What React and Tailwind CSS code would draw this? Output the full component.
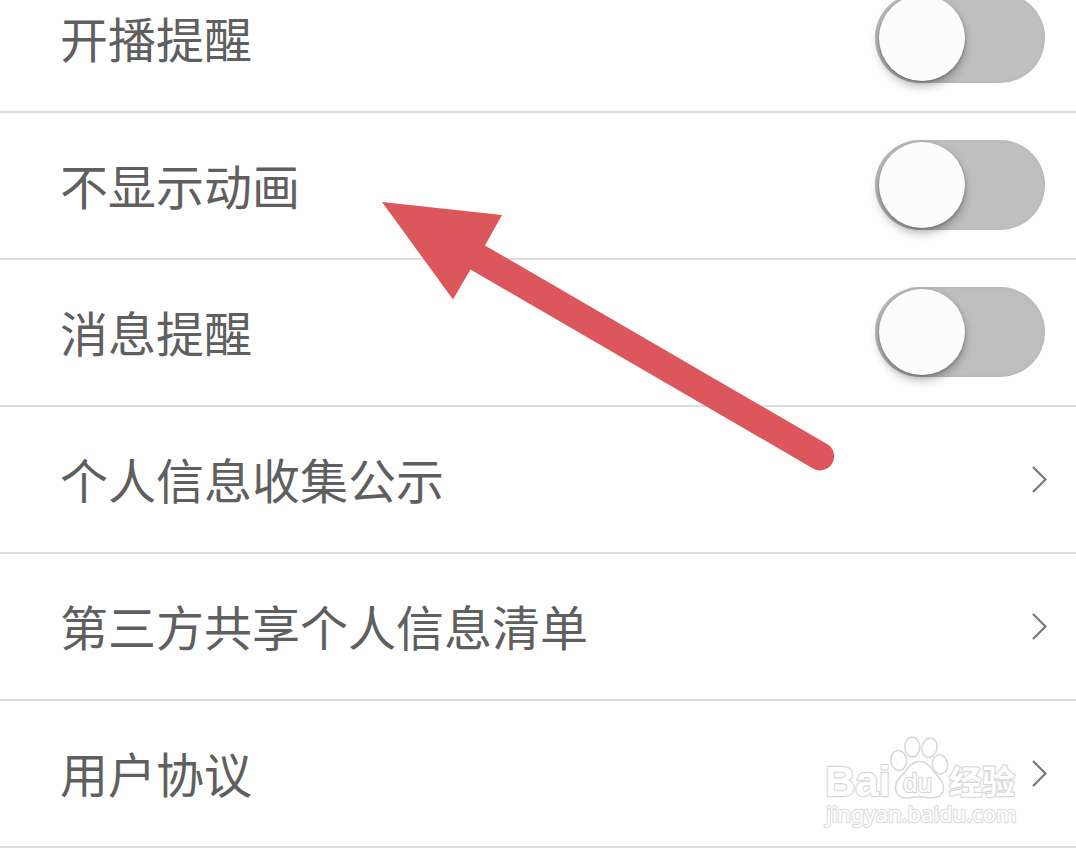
import React, { useState } from 'react';

const switches = [
  { id: 'live-reminder', label: '开播提醒' },
  { id: 'hide-animation', label: '不显示动画' },
  { id: 'message-reminder', label: '消息提醒' },
];

const links = [
  { href: '#collection', label: '个人信息收集公示' },
  { href: '#third-party', label: '第三方共享个人信息清单' },
  { href: '#agreement', label: '用户协议' },
];

const SwitchRow = ({ id, label }) => {
  const [on, setOn] = useState(false);
  return (
    <li className="flex h-[147px] items-center justify-between border-b-2 border-[#dddddd] pb-0.5 pl-[60px] pr-[31px]">
      <label htmlFor={id} className="pb-0.5 text-5xl text-[#5f5f5f]">{label}</label>
      <input
        id={id}
        type="checkbox"
        role="switch"
        checked={on}
        onChange={(e) => setOn(e.target.checked)}
        className="flex h-[90px] w-[170px] shrink-0 cursor-pointer appearance-none items-center rounded-full bg-[#bfbfbf] px-1 shadow-[inset_0_0_3px_#b0b0b0] before:size-[86px] before:rounded-full before:bg-[#fcfcfc] before:shadow-[0_5px_10px_rgba(0,0,0,0.3),0_1px_3px_rgba(0,0,0,0.25)] before:content-[''] checked:justify-end checked:bg-green-500"
      />
    </li>
  );
};

const LinkRow = ({ href, label }) => (
  <li className="border-b-2 border-[#dddddd]">
    <a href={href} className="flex h-[145px] items-center justify-between pb-0.5 pl-[60px] pr-7">
      <span className="pb-0.5 text-5xl text-[#5f5f5f]">{label}</span>
      <svg width="18" height="28" viewBox="0 0 18 28" fill="none" stroke="#777777" strokeWidth="2.200" aria-hidden="true">
        <path d="M3 2 L15.5 14.500 L3 27" />
      </svg>
    </a>
  </li>
);

const Arrow = () => (
  <svg
    className="pointer-events-none absolute left-[380px] top-[200px]"
    width="456"
    height="272"
    viewBox="380 200 456 272"
    fill="#dc575c"
    aria-hidden="true"
  >
    <path d="M382 202 L502 215 L485 245.500 L827 444 A14 14 0 0 1 813 468.500 L470.500 269.500 L453 299.500 Z" />
  </svg>
);

const Watermark = () => (
  <svg
    className="pointer-events-none absolute right-[54px] top-[732px]"
    width="202"
    height="100"
    viewBox="820 732 202 100"
    fill="#ffffff"
    stroke="#d8d8d8"
    strokeWidth="1.500"
  >
    {/* paw */}
    <ellipse cx="898.700" cy="760.500" rx="7.800" ry="10" transform="rotate(-6 898.700 760.500)" />
    <ellipse cx="912.300" cy="747" rx="7.500" ry="10" />
    <ellipse cx="929.500" cy="747.700" rx="7.500" ry="9.800" transform="rotate(14 929.500 747.700)" />
    <ellipse cx="940" cy="764.500" rx="7.600" ry="9.500" transform="rotate(-8 940 764.500)" />
    <path d="M919.500 761.500 C928 761.500 931 768 935 773 C939 778 943.500 781 943.500 787 C943.500 795 938 798 931 798 C926 798 924 796.500 919.500 796.500 C915 796.500 912 798 907 798 C900 798 895.500 794 895.500 787 C895.500 781 900 777 904 773 C908 768 911 761.500 919.500 761.500 Z" />
    <g strokeWidth="2.400" paintOrder="stroke" strokeLinejoin="round">
      <text x="825" y="796" className="font-['Liberation_Sans',sans-serif] text-[42px] font-bold">Bai</text>
      <text x="903" y="792" className="font-['Liberation_Sans',sans-serif] text-[26px]">du</text>
      <text x="949" y="794" className="font-['Noto_Sans_CJK_SC',sans-serif] text-[33px] font-bold">经验</text>
      <text x="826" y="822" className="font-['Noto_Sans',sans-serif] text-[22px]" stroke="#dedede">jingyan.baidu.com</text>
    </g>
  </svg>
);

export default function App() {
  return (
    <main className="relative min-h-screen overflow-hidden bg-[#fefefe] font-['Noto_Sans_CJK_SC',sans-serif]">
      {/* list is scrolled a little past its first row */}
      <ul className="-mt-[34px]">
        {switches.map((item) => (
          <SwitchRow key={item.id} {...item} />
        ))}
        {links.map((item) => (
          <LinkRow key={item.href} {...item} />
        ))}
      </ul>
      <Arrow />
      <Watermark />
    </main>
  );
}
